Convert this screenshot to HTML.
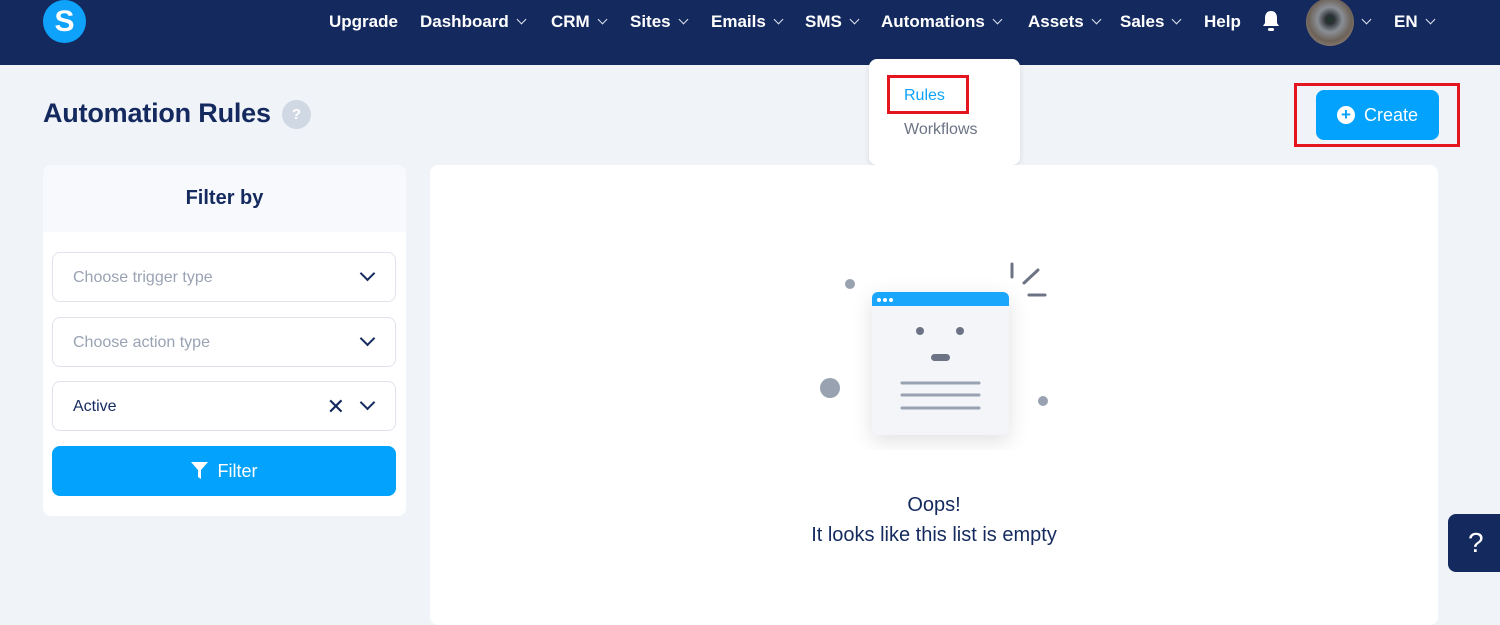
<!DOCTYPE html>
<html><head><style>
*{margin:0;padding:0;box-sizing:border-box}
body{width:1500px;height:616px;background:#f0f3f8;font-family:"Liberation Sans",sans-serif;position:relative;overflow:hidden;color:#142a5e}
.nav{position:absolute;left:0;top:0;width:1500px;height:65px;background:#142a5e}
.ni{position:absolute;top:11px;color:#fff;font-weight:bold;font-size:17px;line-height:22px;white-space:nowrap}
.ch{display:inline-block;width:7px;height:7px;border-right:1.5px solid #dfe4ee;border-bottom:1.5px solid #dfe4ee;transform:rotate(45deg);margin-left:9px;position:relative;top:-4px}
.abs{position:absolute}
.sel{position:absolute;left:52px;width:344px;height:50px;background:#fff;border:1px solid #dfe4ec;border-radius:8px;font-size:16px;line-height:50px;padding-left:20px;color:#9aa3b3}
.dch{position:absolute;right:22px;top:15px;width:11px;height:11px;border-right:2.5px solid #142a5e;border-bottom:2.5px solid #142a5e;transform:rotate(45deg)}
</style></head><body>
<div class="nav">
<div class="abs" style="left:43px;top:0;width:43px;height:43px;border-radius:50%;background:#0ea2fb;color:#fff;font-weight:bold;font-size:30px;text-align:center;line-height:43px">S</div>
<div class="ni" style="left:329px">Upgrade</div>
<div class="ni" style="left:420px">Dashboard<span class="ch"></span></div>
<div class="ni" style="left:551px">CRM<span class="ch"></span></div>
<div class="ni" style="left:630px">Sites<span class="ch"></span></div>
<div class="ni" style="left:711px">Emails<span class="ch"></span></div>
<div class="ni" style="left:805px">SMS<span class="ch"></span></div>
<div class="ni" style="left:881px">Automations<span class="ch"></span></div>
<div class="ni" style="left:1028px">Assets<span class="ch"></span></div>
<div class="ni" style="left:1120px">Sales<span class="ch"></span></div>
<div class="ni" style="left:1204px">Help</div>
<svg class="abs" style="left:1261px;top:10px" width="20" height="22" viewBox="0 0 20 22"><path d="M10 1c-4 0-6 3-6 7v5l-2 3h16l-2-3V8c0-4-2-7-6-7z" fill="#fff"/><rect x="7" y="18" width="6" height="3" rx="1.5" fill="#fff"/></svg>
<div class="abs" style="left:1306px;top:-2px;width:48px;height:48px;border-radius:50%;background:radial-gradient(circle at 50% 45%,#1a3a2a 0,#2c2f33 12%,#8a8f96 35%,#6d6258 60%,#a89b90 100%)"></div>
<div class="ni" style="left:1354px"><span class="ch"></span></div>
<div class="ni" style="left:1394px">EN<span class="ch"></span></div>
</div>
<div class="abs" style="left:43px;top:98px;font-size:27px;font-weight:bold;letter-spacing:-0.2px">Automation Rules</div>
<div class="abs" style="left:282px;top:100px;width:29px;height:29px;border-radius:50%;background:#d0d8e3;color:#fff;font-weight:bold;font-size:15px;text-align:center;line-height:29px">?</div>
<div class="abs" style="left:869px;top:59px;width:151px;height:106px;background:#fff;border-radius:8px;box-shadow:0 2px 6px rgba(0,0,0,.1)"></div>
<div class="abs" style="left:887px;top:75px;width:82px;height:39px;border:3px solid #e4151f"></div>
<div class="abs" style="left:904px;top:87px;font-size:16px;color:#0ea2fb">Rules</div>
<div class="abs" style="left:904px;top:121px;font-size:16px;color:#6b7384">Workflows</div>
<div class="abs" style="left:1294px;top:83px;width:166px;height:64px;border:3px solid #e4151f"></div>
<div class="abs" style="left:1316px;top:90px;width:123px;height:50px;background:#03a2fc;border-radius:8px;color:#fff;font-size:18px;line-height:50px;padding-left:48px">Create</div>
<div class="abs" style="left:1337px;top:106px;width:18px;height:18px;border-radius:50%;background:#fff;color:#03a2fc;font-weight:bold;font-size:17px;line-height:18px;text-align:center">+</div>
<div class="abs" style="left:43px;top:165px;width:363px;height:351px;background:#fff;border-radius:8px;overflow:hidden">
<div style="height:67px;background:#f7f9fc;text-align:center;font-weight:bold;font-size:20px;line-height:67px">Filter by</div></div>
<div class="sel" style="top:252px">Choose trigger type<span class="dch"></span></div>
<div class="sel" style="top:317px">Choose action type<span class="dch"></span></div>
<div class="sel" style="top:381px;color:#142a5e">Active<span class="dch"></span><span style="position:absolute;right:50px;top:0;font-size:22px;color:#142a5e">✕</span></div>
<div class="abs" style="left:52px;top:446px;width:344px;height:50px;background:#03a2fc;border-radius:8px;color:#fff;font-size:18px;line-height:50px;text-align:center"><svg width="17" height="17" viewBox="0 0 17 17" style="vertical-align:-2px;margin-right:10px"><path d="M0 0h17L10 8v9L7 15V8z" fill="#fff"/></svg>Filter</div>
<div class="abs" style="left:430px;top:165px;width:1008px;height:460px;background:#fff;border-radius:8px"></div>
<svg class="abs" style="left:800px;top:250px" width="270" height="200" viewBox="0 0 270 200">
<circle cx="50" cy="34" r="5" fill="#98a2b0"/><circle cx="30" cy="138" r="10" fill="#98a2b0"/><circle cx="243" cy="151" r="5" fill="#98a2b0"/>
<g stroke="#6b7384" stroke-width="3" stroke-linecap="round"><path d="M212 14v13M224 33l14-13M229 45h16"/></g>
<rect x="72" y="42" width="137" height="143" rx="6" fill="#f3f5f9" style="filter:drop-shadow(0 6px 10px rgba(0,0,0,.12))"/>
<path d="M78 42h125a6 6 0 0 1 6 6v8H72v-8a6 6 0 0 1 6-6z" fill="#1aa7fb"/>
<circle cx="79" cy="50" r="2" fill="#fff"/><circle cx="85" cy="50" r="2" fill="#fff"/><circle cx="91" cy="50" r="2" fill="#fff"/>
<circle cx="120" cy="81" r="4" fill="#6b7384"/><circle cx="160" cy="81" r="4" fill="#6b7384"/>
<rect x="131" y="104" width="19" height="7" rx="3.5" fill="#6b7384"/>
<g stroke="#98a2b0" stroke-width="3" stroke-linecap="round"><path d="M102 133h77M102 145h77M102 158h77"/></g>
</svg>
<div class="abs" style="left:430px;width:1008px;top:490px;text-align:center;font-size:20px;line-height:30px;color:#142a5e">Oops!<br>It looks like this list is empty</div>
<div class="abs" style="left:1448px;top:514px;width:60px;height:58px;background:#142a5e;border-radius:8px;color:#fff;font-size:28px;line-height:58px;padding-left:20px">?</div>
</body></html>
